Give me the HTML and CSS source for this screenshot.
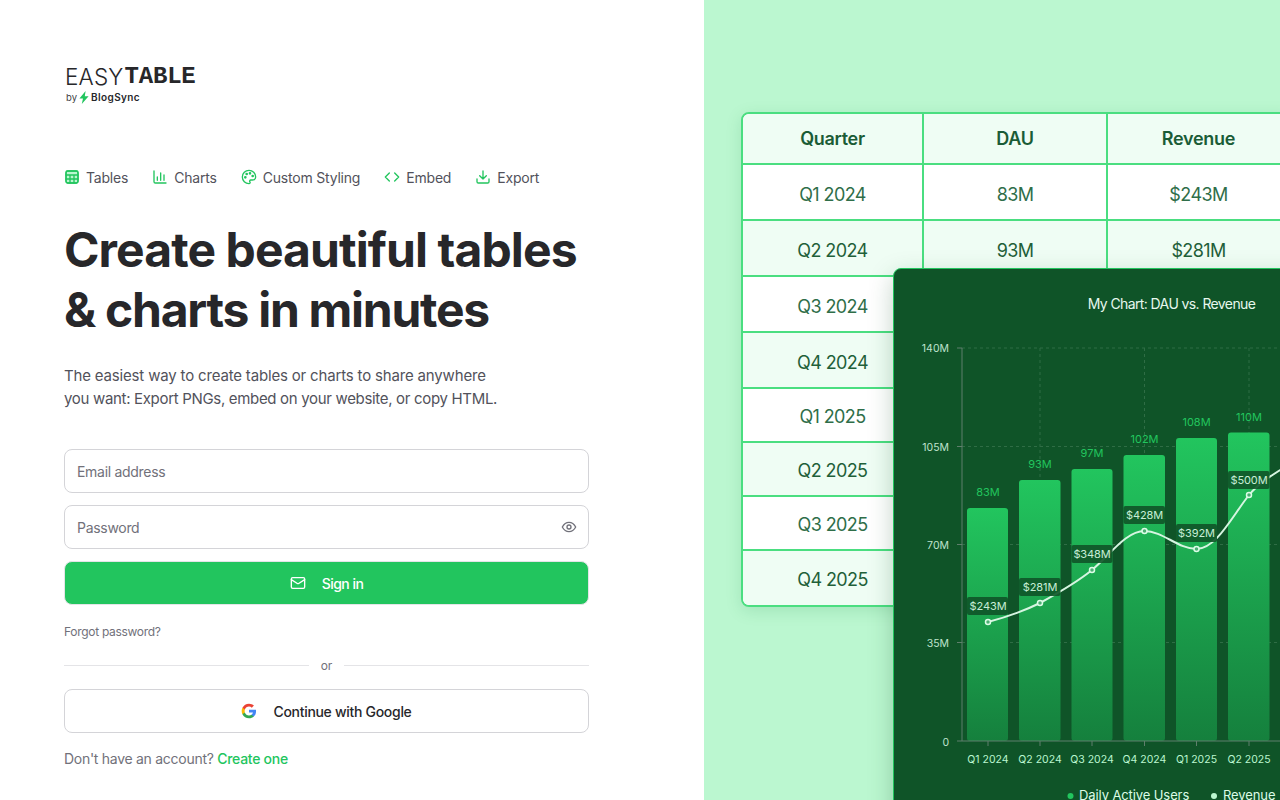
FILE: index.html
```html
<!DOCTYPE html>
<html lang="en">
<head>
    <meta charset="UTF-8">
    <meta name="viewport" content="width=device-width, initial-scale=1.0">
    <title>EasyTable</title>
    <link rel="stylesheet" href="styles.css">
</head>
<body>
    <main class="left">
        <div class="logo">
            <div class="logo-name"><span class="logo-easy">EASY</span><span class="logo-table">TABLE</span></div>
            <div class="logo-by">
                <span>by</span>
                <svg width="10" height="13" viewBox="0 0 10 13"><path d="M6.6 0 0.4 7.4H4L2.8 13 9.6 5.2H5.8Z" fill="#22c55e"/></svg>
                <span class="logo-blog">BlogSync</span>
            </div>
        </div>

        <nav class="features">
            <a class="feature" href="#">
                <svg class="icon" viewBox="0 0 24 24"><rect x="3" y="3" width="18" height="18" rx="2.5" fill="#bbf7d0"/><path d="M3 9h18M3 15h18M9 9v12M15 9v12"/><rect x="3" y="3" width="18" height="18" rx="2.5"/></svg>
                Tables
            </a>
            <a class="feature" href="#">
                <svg class="icon" viewBox="0 0 24 24"><path d="M3 3v16a2 2 0 0 0 2 2h16"/><path d="M8 17v-5M13 17V6M18 17v-8"/></svg>
                Charts
            </a>
            <a class="feature" href="#">
                <svg class="icon" viewBox="0 0 24 24"><path d="M12 22a10 10 0 1 1 10-10c0 2.8-2.2 4.5-5 4.5h-2.3a1.8 1.8 0 0 0-1.3 3c.7.8.2 2.5-1.4 2.5Z"/><circle cx="13.5" cy="6.5" r="1" fill="#22c55e"/><circle cx="17.5" cy="10.5" r="1" fill="#22c55e"/><circle cx="8.5" cy="7.5" r="1" fill="#22c55e"/><circle cx="6.5" cy="12.5" r="1" fill="#22c55e"/></svg>
                Custom Styling
            </a>
            <a class="feature" href="#">
                <svg class="icon" viewBox="0 0 24 24"><path d="m16 18 6-6-6-6M8 6l-6 6 6 6"/></svg>
                Embed
            </a>
            <a class="feature" href="#">
                <svg class="icon" viewBox="0 0 24 24"><path d="M21 15v4a2 2 0 0 1-2 2H5a2 2 0 0 1-2-2v-4"/><path d="m7 10 5 5 5-5M12 15V3"/></svg>
                Export
            </a>
        </nav>

        <h1>Create beautiful tables<br><span class="h1-second">&amp; charts in minutes</span></h1>
        <p class="lead"><span class="lead-first">The easiest way to create tables or charts to share anywhere</span><br>you want: Export PNGs, embed on your website, or copy HTML.</p>

        <form class="login-form">
            <div class="textbox">
                <input type="email" placeholder="Email address" aria-label="Email address">
            </div>
            <div class="textbox">
                <input type="password" placeholder="Password" aria-label="Password">
                <svg class="eye" viewBox="0 0 24 24"><path d="M2 12c2.400-4.600 5.800-7 10-7s7.600 2.400 10 7c-2.400 4.600-5.800 7-10 7s-7.600-2.400-10-7Z"/><circle cx="12" cy="12" r="3"/></svg>
            </div>
            <button type="button" class="btn btn-primary">
                <svg class="btn-icon" viewBox="0 0 24 24"><rect x="2" y="4" width="20" height="16" rx="2"/><path d="m22 7-8.970 5.700a1.940 1.940 0 0 1-2.060 0L2 7"/></svg>
                Sign in
            </button>
            <a href="#" class="forgot-link">Forgot password?</a>
            <div class="divider"><span>or</span></div>
            <button type="button" class="btn btn-google">
                <svg class="google" viewBox="0 0 24 24">
                    <path fill="#4285F4" d="M22.560 12.250c0-.780-.070-1.530-.200-2.250H12v4.260h5.920c-.260 1.370-1.040 2.530-2.210 3.310v2.770h3.570c2.080-1.920 3.280-4.740 3.280-8.090z"/>
                    <path fill="#34A853" d="M12 23c2.970 0 5.460-.980 7.280-2.660l-3.570-2.770c-.980.660-2.230 1.060-3.710 1.060-2.860 0-5.290-1.930-6.160-4.530H2.180v2.840C3.990 20.530 7.700 23 12 23z"/>
                    <path fill="#FBBC05" d="M5.840 14.090c-.220-.660-.350-1.360-.350-2.090s.130-1.430.350-2.090V7.070H2.180C1.430 8.550 1 10.220 1 12s.430 3.450 1.180 4.930l2.850-2.220.810-.620z"/>
                    <path fill="#EA4335" d="M12 5.380c1.620 0 3.060.560 4.210 1.640l3.150-3.150C17.450 2.090 14.970 1 12 1 7.700 1 3.990 3.470 2.180 7.070l3.660 2.840c.870-2.600 3.300-4.530 6.160-4.530z"/>
                </svg>
                Continue with Google
            </button>
        </form>
        <p class="signup-link">Don't have an account? <a href="#">Create one</a></p>
    </main>

    <aside class="right">
        <div class="table-card">
            <table>
                <colgroup><col class="col-a"><col class="col-b"><col class="col-c"></colgroup>
                <tr class="head"><th>Quarter</th><th>DAU</th><th>Revenue</th></tr>
                <tr class="y24"><td>Q1 2024</td><td>83M</td><td>$243M</td></tr>
                <tr class="y24 alt"><td>Q2 2024</td><td>93M</td><td>$281M</td></tr>
                <tr class="y24"><td>Q3 2024</td><td>97M</td><td>$348M</td></tr>
                <tr class="y24 alt"><td>Q4 2024</td><td>102M</td><td>$428M</td></tr>
                <tr class="y25"><td>Q1 2025</td><td>108M</td><td>$392M</td></tr>
                <tr class="y25 alt"><td>Q2 2025</td><td>110M</td><td>$500M</td></tr>
                <tr class="y25"><td>Q3 2025</td><td>115M</td><td>$540M</td></tr>
                <tr class="y25 alt"><td>Q4 2025</td><td>120M</td><td>$610M</td></tr>
            </table>
        </div>

        <div class="chart-card">
            <svg class="chart" width="400" height="540" viewBox="893 268 400 540">
                <defs>
                    <linearGradient id="bar" x1="0" y1="0" x2="0" y2="1">
                        <stop offset="0" stop-color="#22c55e"/>
                        <stop offset="1" stop-color="#15803d"/>
                    </linearGradient>
                </defs>

                <text class="chart-title" x="1171.500" y="309" text-anchor="middle">My Chart: DAU vs. Revenue</text>

                <g class="grid">
                    <path d="M962 348H1293M962 446.500H1293M962 544.500H1293M962 642.500H1293"/>
                    <path d="M1040 348V741M1144.500 348V741M1249 348V741"/>
                </g>

                <g class="bars" fill="url(#bar)">
                    <rect x="967" y="508" width="41" height="233" rx="3"/>
                    <rect x="1019" y="480" width="41.500" height="261" rx="3"/>
                    <rect x="1071.500" y="469" width="41" height="272" rx="3"/>
                    <rect x="1123.500" y="455" width="41.500" height="286" rx="3"/>
                    <rect x="1176" y="438" width="41" height="303" rx="3"/>
                    <rect x="1228" y="432.500" width="41.500" height="308.500" rx="3"/>
                    <rect x="1280.500" y="420" width="41" height="321" rx="3"/>
                </g>

                <g class="axis">
                    <path d="M957 348H962V741M957 446.500H962M957 544.500H962M957 642.500H962M957 741H1293"/>
                    <path d="M988 741v5M1040 741v5M1092 741v5M1144.500 741v5M1196.500 741v5M1249 741v5"/>
                </g>
                <g class="y-labels" text-anchor="end">
                    <text x="949" y="352">140M</text>
                    <text x="949" y="450.500">105M</text>
                    <text x="949" y="549">70M</text>
                    <text x="949" y="647">35M</text>
                    <text x="949" y="745.500">0</text>
                </g>
                <g class="x-labels" text-anchor="middle">
                    <text x="988" y="763">Q1 2024</text>
                    <text x="1040" y="763">Q2 2024</text>
                    <text x="1092" y="763">Q3 2024</text>
                    <text x="1144.500" y="763">Q4 2024</text>
                    <text x="1196.500" y="763">Q1 2025</text>
                    <text x="1249" y="763">Q2 2025</text>
                </g>
                <g class="bar-labels" text-anchor="middle">
                    <text x="988" y="496">83M</text>
                    <text x="1040" y="468">93M</text>
                    <text x="1092" y="457">97M</text>
                    <text x="1144.500" y="443">102M</text>
                    <text x="1196.500" y="426">108M</text>
                    <text x="1249" y="421">110M</text>
                </g>

                <path class="line" d="M988 622C1007 617 1022 612 1040 603C1060 592 1076 583 1092 570C1110 555 1126 531 1144.500 531C1163 531 1178 549 1196.500 549C1216 549 1231 518 1249 495C1258 484 1270 476 1293 462"/>
                <g class="pills">
                    <rect x="967" y="597" width="41" height="18" rx="2"/>
                    <rect x="1019" y="578" width="41.500" height="18" rx="2"/>
                    <rect x="1071.500" y="545" width="41" height="18" rx="2"/>
                    <rect x="1123.500" y="506" width="41.500" height="18" rx="2"/>
                    <rect x="1176" y="524" width="41" height="18" rx="2"/>
                    <rect x="1228" y="471" width="41.500" height="18" rx="2"/>
                </g>
                <g class="points">
                    <circle cx="988" cy="622" r="2.500"/>
                    <circle cx="1040" cy="603" r="2.500"/>
                    <circle cx="1092" cy="570" r="2.500"/>
                    <circle cx="1144.500" cy="531" r="2.500"/>
                    <circle cx="1196.500" cy="549" r="2.500"/>
                    <circle cx="1249" cy="495" r="2.500"/>
                </g>
                <g class="pill-labels" text-anchor="middle">
                    <text x="988" y="610">$243M</text>
                    <text x="1040" y="591">$281M</text>
                    <text x="1092" y="558">$348M</text>
                    <text x="1144.500" y="519">$428M</text>
                    <text x="1196.500" y="537">$392M</text>
                    <text x="1249" y="484">$500M</text>
                </g>

                <circle cx="1070.500" cy="796" r="3" fill="#22c55e"/>
                <text class="legend" x="1079" y="799.500">Daily Active Users</text>
                <circle cx="1214" cy="796" r="3" fill="#bbf7d0"/>
                <text class="legend" x="1223" y="799.500">Revenue</text>
            </svg>
        </div>
    </aside>
</body>
</html>
```

FILE: styles.css
```css
* {
    box-sizing: border-box;
}

html, body {
    height: 100%;
}

body {
    margin: 0;
    display: flex;
    height: 100vh;
    overflow: hidden;
    font-family: Inter, "Liberation Sans", sans-serif;
    background-color: #fff;
    color: #27272a;
}

.left {
    width: 704px;
    flex-shrink: 0;
    padding: 64px 115px 0 64px;
}

.logo {
    height: 41px;
    padding-top: 2px;
}

.logo-name {
    display: flex;
    align-items: center;
    height: 22px;
    margin-bottom: -2px;
    font-size: 23px;
    line-height: 22px;
}

.logo-easy {
    font-weight: 300;
    letter-spacing: 0.2px;
    margin-left: 1px;
    margin-right: 1px;
    font-size: 22.500px;
}

.logo-table {
    font-family: "Liberation Mono", monospace;
    font-weight: 700;
    font-size: 24px;
    letter-spacing: -0.200px;
}

.logo-by {
    display: flex;
    align-items: center;
    gap: 2px;
    margin-top: 5px;
    margin-left: 2px;
    font-size: 9.500px;
    line-height: 13px;
    color: #3f3f46;
}

.logo-blog {
    font-weight: 600;
    color: #27272a;
    font-size: 10px;
    letter-spacing: 0.400px;
}

.features {
    display: flex;
    align-items: center;
    gap: 24px;
    margin-top: 62px;
    height: 20px;
}

.feature {
    display: flex;
    align-items: center;
    gap: 6px;
    font-size: 14px;
    letter-spacing: -0.200px;
    color: #52525b;
    text-decoration: none;
}

.icon {
    width: 16px;
    height: 16px;
    fill: none;
    stroke: #22c55e;
    stroke-width: 2;
    stroke-linecap: round;
    stroke-linejoin: round;
}

h1 {
    margin: 33px 0 0;
    font-size: 48px;
    font-weight: 700;
    line-height: 60px;
    letter-spacing: -0.900px;
    white-space: nowrap;
    color: #27272a;
}

.h1-second {
    letter-spacing: -1.270px;
}

.lead {
    margin: 24px 0 0;
    font-size: 15px;
    line-height: 23px;
    letter-spacing: -0.320px;
    color: #52525b;
}

.lead-first {
    letter-spacing: -0.170px;
}

.login-form {
    margin-top: 39px;
    display: flex;
    flex-direction: column;
    gap: 12px;
}

.textbox {
    position: relative;
}

.textbox input {
    width: 100%;
    height: 44px;
    padding: 0 12px;
    border: 1px solid #d4d4d8;
    border-radius: 8px;
    font-family: inherit;
    font-size: 14px;
    letter-spacing: -0.300px;
    color: #27272a;
    background: #fff;
    outline: none;
}

.textbox input::placeholder {
    color: #71717a;
    opacity: 1;
}

.eye {
    position: absolute;
    right: 12px;
    top: 14px;
    width: 16px;
    height: 16px;
    fill: none;
    stroke: #71717a;
    stroke-width: 2;
}

.btn {
    display: flex;
    align-items: center;
    justify-content: center;
    width: 100%;
    height: 44px;
    border-radius: 8px;
    font-family: inherit;
    font-size: 14px;
    font-weight: 500;
    letter-spacing: -0.300px;
    cursor: pointer;
}

.btn-primary {
    gap: 16px;
    background-color: #22c55e;
    border: 1px solid #e4e4e7;
    color: #fff;
    letter-spacing: -0.550px;
}

.btn-icon {
    width: 16px;
    height: 16px;
    fill: none;
    stroke: #fff;
    stroke-width: 2;
    stroke-linecap: round;
    stroke-linejoin: round;
}

.btn-google {
    gap: 16px;
    background-color: #fff;
    border: 1px solid #d4d4d8;
    color: #27272a;
}

.google {
    width: 16px;
    height: 16px;
}

.forgot-link {
    margin-top: 7px;
    font-size: 12px;
    line-height: 16px;
    letter-spacing: -0.300px;
    color: #71717a;
    text-decoration: none;
}

.divider {
    display: flex;
    align-items: center;
    gap: 12px;
    margin-top: 5px;
    margin-bottom: 4px;
    height: 16px;
    font-size: 12px;
    color: #71717a;
}

.divider::before,
.divider::after {
    content: "";
    flex: 1;
    height: 1px;
    background-color: #e4e4e7;
}

.signup-link {
    margin: 16px 0 0;
    font-size: 14px;
    line-height: 20px;
    letter-spacing: -0.280px;
    color: #71717a;
}

.signup-link a {
    color: #22c55e;
    font-weight: 500;
    text-decoration: none;
}

.right {
    position: relative;
    flex: 1;
    overflow: hidden;
    background-color: #bbf7d0;
}

/* table and chart are loose cards on the green canvas */
.table-card {
    position: absolute;
    left: 37px;
    top: 112px;
    width: 552px;
    border: 2px solid #4ade80;
    border-radius: 8px;
    overflow: hidden;
    background-color: #fff;
    box-shadow: 0 4px 16px rgba(21, 128, 61, 0.15);
}

table {
    width: 100%;
    table-layout: fixed;
    border-collapse: separate;
    border-spacing: 0;
    color: #2f6e49;
    font-size: 18px;
    letter-spacing: -0.600px;
    text-align: center;
}

.col-a {
    width: 181px;
}

.col-b {
    width: 184px;
}

th, td {
    padding: 0;
    border-right: 2px solid #4ade80;
    border-bottom: 2px solid #4ade80;
}

tr:last-child td {
    border-bottom: none;
}

.head th {
    height: 51px;
    font-weight: 600;
    letter-spacing: -0.300px;
    color: #1a5c36;
    background-color: #effdf4;
}

.y24 td {
    height: 56px;
    padding-top: 4px;
}

.y25 td {
    height: 54px;
    padding-top: 2px;
}

.alt td {
    background-color: #effdf4;
    color: #1f6039;
}

.chart-card {
    position: absolute;
    left: 189px;
    top: 268px;
    width: 420px;
    height: 560px;
    border: 1px solid #22c55e;
    border-radius: 8px;
    overflow: hidden;
    background-color: #0f5428;
    box-shadow: 0 8px 24px rgba(15, 84, 40, 0.25);
}

.chart {
    display: block;
    margin: -1px 0 0 -1px;
}

.chart text {
    font-family: Inter, "Liberation Sans", sans-serif;
}

.chart .chart-title {
    font-size: 14px;
    font-weight: 400;
    letter-spacing: -0.600px;
    fill: #e7f8ee;
}

.grid path {
    fill: none;
    stroke: #2f6d45;
    stroke-width: 1;
    stroke-dasharray: 3 3;
}

.axis path {
    fill: none;
    stroke: #5f7f6c;
    stroke-width: 1;
}

.y-labels text {
    font-size: 10.500px;
    fill: #bfe3cd;
}

.x-labels text {
    font-size: 10.500px;
    fill: #bbf7d0;
}

.bar-labels text {
    font-size: 11px;
    fill: #22c55e;
}

.pills rect {
    fill: #0f5428;
    opacity: 0.9;
}

.pill-labels text {
    font-size: 11px;
    letter-spacing: -0.100px;
    fill: #c7eed6;
}

.line {
    fill: none;
    stroke: #d6f5e1;
    stroke-width: 2;
}

.points circle {
    fill: #4caf73;
    stroke: #dcfce7;
    stroke-width: 1.500;
}

.chart .legend {
    font-size: 13px;
    letter-spacing: -0.100px;
    fill: #dcfce7;
}
```
